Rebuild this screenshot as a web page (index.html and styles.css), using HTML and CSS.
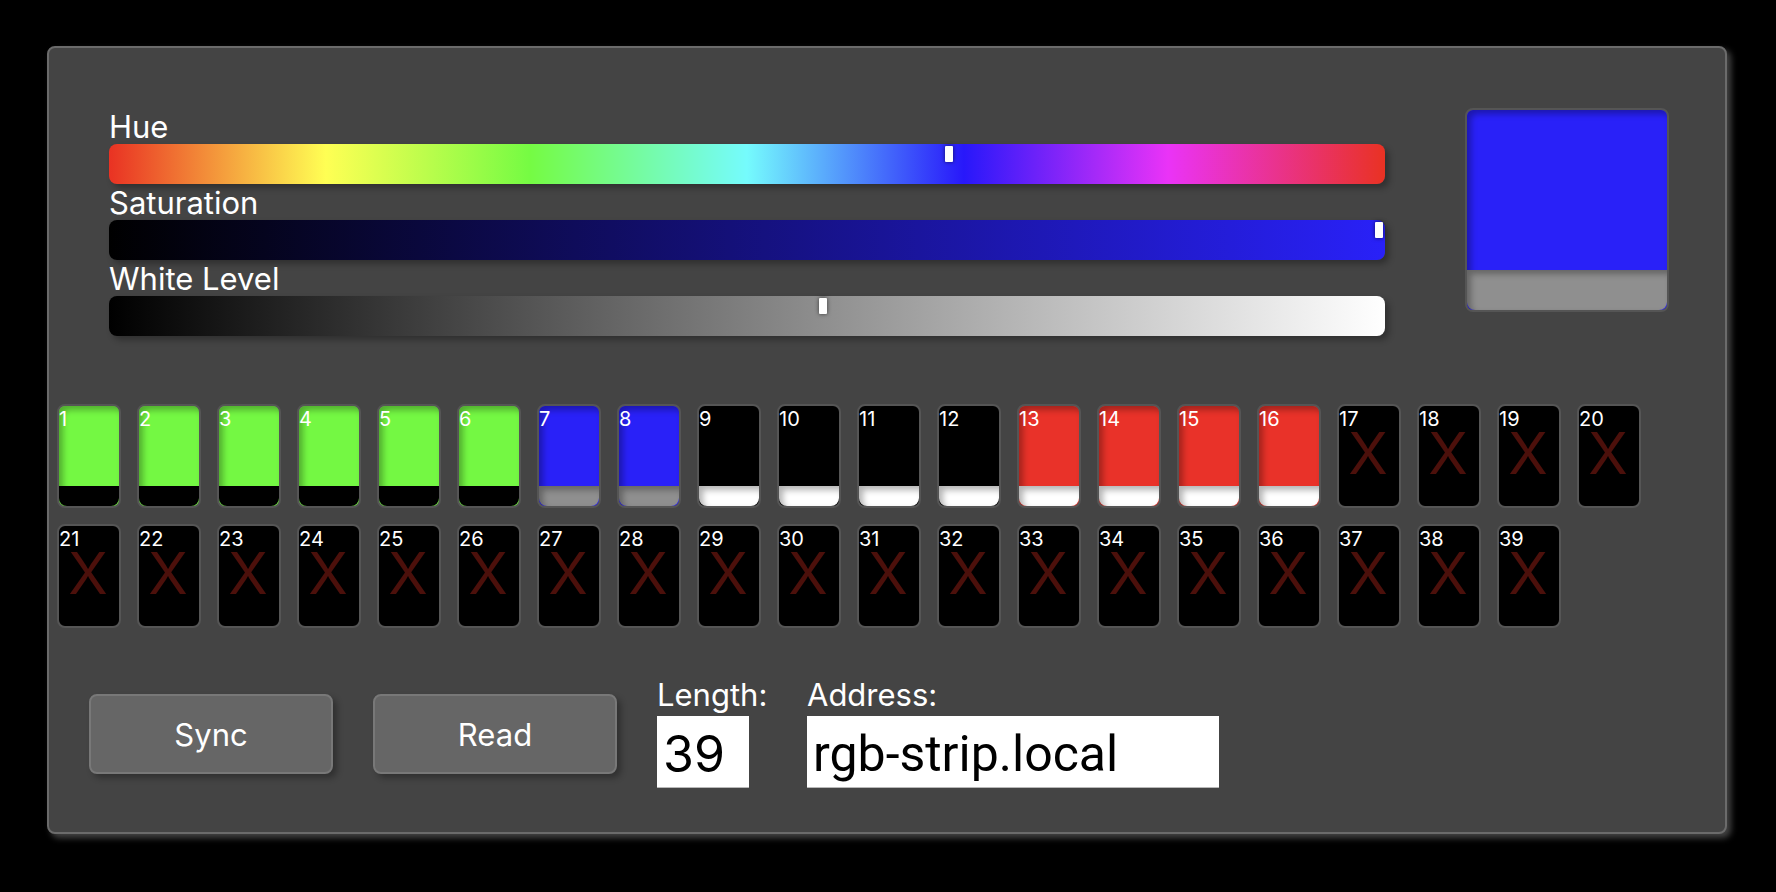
FILE: index.html
```html
<!DOCTYPE html>
<html lang="en">
<head>
<meta charset="utf-8">
<meta name="viewport" content="width=device-width, initial-scale=1">
<title>RGB Strip</title>
<link rel="stylesheet" href="styles.css">
</head>
<body>
<main class="panel">
  <section class="mixer">
    <div class="sliders">
      <label class="label" for="hue">Hue</label>
      <input class="slider slider-hue" id="hue" type="range" min="0" max="100" value="66">
      <label class="label" for="saturation">Saturation</label>
      <input class="slider slider-saturation" id="saturation" type="range" min="0" max="100" value="100">
      <label class="label" for="white">White Level</label>
      <input class="slider slider-white" id="white" type="range" min="0" max="100" value="56">
    </div>
    <div class="preview blue"><span class="level dim"></span></div>
  </section>

  <section class="strip">
    <button class="led green">1<span class="level off"></span></button>
    <button class="led green">2<span class="level off"></span></button>
    <button class="led green">3<span class="level off"></span></button>
    <button class="led green">4<span class="level off"></span></button>
    <button class="led green">5<span class="level off"></span></button>
    <button class="led green">6<span class="level off"></span></button>
    <button class="led blue">7<span class="level dim"></span></button>
    <button class="led blue">8<span class="level dim"></span></button>
    <button class="led">9<span class="level full"></span></button>
    <button class="led">10<span class="level full"></span></button>
    <button class="led">11<span class="level full"></span></button>
    <button class="led">12<span class="level full"></span></button>
    <button class="led red">13<span class="level full"></span></button>
    <button class="led red">14<span class="level full"></span></button>
    <button class="led red">15<span class="level full"></span></button>
    <button class="led red">16<span class="level full"></span></button>
    <button class="led">17<span class="unset">X</span></button>
    <button class="led">18<span class="unset">X</span></button>
    <button class="led">19<span class="unset">X</span></button>
    <button class="led">20<span class="unset">X</span></button>
    <button class="led">21<span class="unset">X</span></button>
    <button class="led">22<span class="unset">X</span></button>
    <button class="led">23<span class="unset">X</span></button>
    <button class="led">24<span class="unset">X</span></button>
    <button class="led">25<span class="unset">X</span></button>
    <button class="led">26<span class="unset">X</span></button>
    <button class="led">27<span class="unset">X</span></button>
    <button class="led">28<span class="unset">X</span></button>
    <button class="led">29<span class="unset">X</span></button>
    <button class="led">30<span class="unset">X</span></button>
    <button class="led">31<span class="unset">X</span></button>
    <button class="led">32<span class="unset">X</span></button>
    <button class="led">33<span class="unset">X</span></button>
    <button class="led">34<span class="unset">X</span></button>
    <button class="led">35<span class="unset">X</span></button>
    <button class="led">36<span class="unset">X</span></button>
    <button class="led">37<span class="unset">X</span></button>
    <button class="led">38<span class="unset">X</span></button>
    <button class="led">39<span class="unset">X</span></button>
  </section>

  <section class="actions">
    <button class="action">Sync</button>
    <button class="action">Read</button>
    <div class="field field-length">
      <label class="label field-label" for="length">Length:</label>
      <input class="text text-length" id="length" type="text" inputmode="numeric" value="39">
    </div>
    <div class="field">
      <label class="label field-label" for="address">Address:</label>
      <input class="text text-address" id="address" type="text" value="rgb-strip.local">
    </div>
  </section>
</main>
</body>
</html>
```

FILE: styles.css
```css
* {
  box-sizing: border-box;
}

body {
  margin: 0;
  padding: 46px 49px 46px 47px;
  background: #000;
  color: #fff;
  font-family: Inter, "Liberation Sans", sans-serif;
  font-size: 31px;
}

button,
input {
  margin: 0;
  font-family: inherit;
}

.panel {
  border: 2px solid #6b6b6b;
  border-radius: 8px;
  background: #444;
  box-shadow: 4px 4px 6px #444;
}

.mixer {
  display: flex;
  gap: 80px;
  padding: 60px 56px 68px 60px;
}

.sliders {
  display: flex;
  flex: 1;
  flex-direction: column;
}

.label {
  display: block;
  padding-top: 2px;
  line-height: 34px;
}

.slider {
  display: block;
  width: 100%;
  height: 40px;
  padding: 2px 2px 22px;
  border-radius: 8px;
  box-shadow: 4px 4px 6px rgba(0, 0, 0, 0.3);
  appearance: none;
}

.slider::-webkit-slider-thumb {
  width: 8px;
  height: 16px;
  border-radius: 1px;
  background: #fff;
  box-shadow: 0 0 4px rgba(0, 0, 0, 0.6);
  appearance: none;
}

.slider-hue {
  background: linear-gradient(to right, #e93223, #ffff54 17%, #75fb43 33%, #75fbfd 50%, #2818fa 67%, #ea33f7 83%, #e93223);
}

.slider-saturation {
  background: linear-gradient(to right, #000, #2921f8);
}

.slider-white {
  background: linear-gradient(to right, #000, #fff);
}

.preview,
.led {
  display: flex;
  flex-direction: column;
  border: 2px solid #555;
  border-radius: 8px;
  background: #000;
  box-shadow: inset 4px 4px 6px rgba(0, 0, 0, 0.3);
}

.preview {
  width: 204px;
  height: 204px;
}

.level {
  height: 20px;
  margin-top: auto;
  border-radius: 0 0 8px 8px;
  box-shadow: inset 4px 4px 6px rgba(0, 0, 0, 0.3);
}

.preview .level {
  height: 40px;
}

.strip {
  display: grid;
  grid-template-columns: repeat(auto-fill, 64px);
  gap: 16px;
  padding: 0 8px;
}

.led {
  height: 104px;
  padding: 0;
  color: #fff;
  font-size: 20px;
  line-height: 26px;
  text-align: left;
}

.preview.blue,
.led.blue {
  background: #2921f8;
}

.led.green {
  background: #74f843;
}

.led.red {
  background: #e93229;
}

.off {
  background: #000;
}

.dim {
  background: #8f8f8f;
}

.full {
  background: #fff;
}

.unset {
  margin-bottom: auto;
  padding-right: 2px;
  color: #4c100b;
  font-size: 58px;
  line-height: 42px;
  text-align: center;
}

.actions {
  display: flex;
  flex-wrap: wrap;
  align-items: center;
  gap: 40px;
  padding: 52px 40px 44px;
}

.action {
  width: 244px;
  height: 80px;
  border: 2px solid #787878;
  border-radius: 8px;
  background: #666;
  box-shadow: 4px 4px 6px rgba(0, 0, 0, 0.3);
  color: #fff;
  font-size: 31px;
}

.field-length {
  width: 110px;
}

.field-label {
  padding: 0 0 6px;
  line-height: 30px;
}

.text {
  display: block;
  height: 72px;
  padding: 8px 4px 4px 6px;
  border: 0;
  border-bottom: 1px solid #b8b8b8;
  border-radius: 0;
  background: #fff;
  color: #000;
  font-size: 50px;
}

.text-length {
  width: 92px;
}

.text-address {
  width: 412px;
  font-family: Roboto, Inter, sans-serif;
}
```
